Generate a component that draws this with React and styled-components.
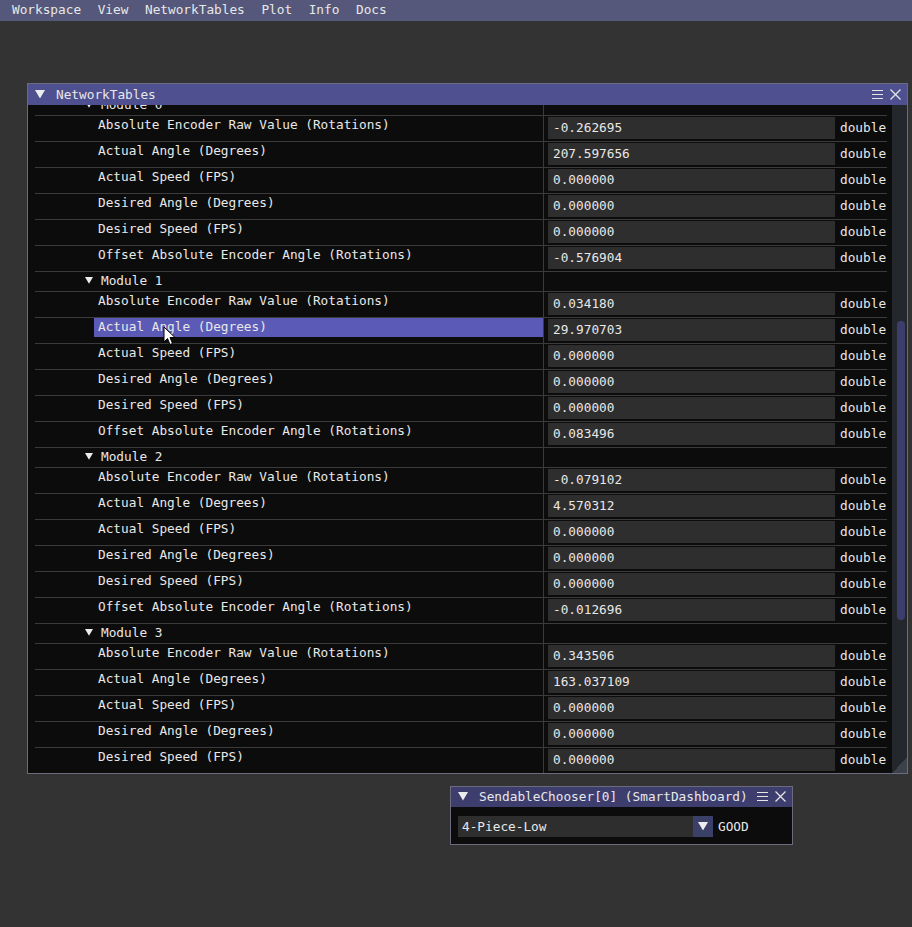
import React from "react";
import styled, { createGlobalStyle } from "styled-components";

const LABELS = [
  "Absolute Encoder Raw Value (Rotations)",
  "Actual Angle (Degrees)",
  "Actual Speed (FPS)",
  "Desired Angle (Degrees)",
  "Desired Speed (FPS)",
  "Offset Absolute Encoder Angle (Rotations)",
];

const MODULES = [
  ["-0.262695", "207.597656", "0.000000", "0.000000", "0.000000", "-0.576904"],
  ["0.034180", "29.970703", "0.000000", "0.000000", "0.000000", "0.083496"],
  ["-0.079102", "4.570312", "0.000000", "0.000000", "0.000000", "-0.012696"],
  ["0.343506", "163.037109", "0.000000", "0.000000", "0.000000", "-0.211426"],
];

const MENU = ["Workspace", "View", "NetworkTables", "Plot", "Info", "Docs"];

const Arrow = ({ size = 10 }) => (
  <ArrowSvg width={size} height={size * 0.85} viewBox="0 0 10 8.5">
    <polygon points="0,0 10,0 5,8.5" fill="#ececec" />
  </ArrowSvg>
);

const TitleIcons = () => (
  <IconGroup>
    <svg width="13" height="13" viewBox="0 0 13 13">
      <g stroke="#e6e6e6" strokeWidth="1">
        <line x1="1" y1="2.5" x2="12" y2="2.5" />
        <line x1="1" y1="6.5" x2="12" y2="6.5" />
        <line x1="1" y1="10.5" x2="12" y2="10.5" />
      </g>
    </svg>
    <svg width="13" height="13" viewBox="0 0 13 13">
      <g stroke="#e6e6e6" strokeWidth="1.2">
        <line x1="1.5" y1="1.5" x2="11.5" y2="11.5" />
        <line x1="11.5" y1="1.5" x2="1.5" y2="11.5" />
      </g>
    </svg>
  </IconGroup>
);

export default function App() {
  return (
    <>
      <GlobalStyle />
      <MenuBar>
        {MENU.map((m) => (
          <MenuItem key={m}>{m}</MenuItem>
        ))}
      </MenuBar>

      <Desktop>
        <Window $left={27} $top={83} $width={881} $height={691}>
          <TitleBar $active>
            <Arrow />
            <TitleText>NetworkTables</TitleText>
            <TitleIcons />
          </TitleBar>
          <Body>
            <TableArea>
              <TableList>
                {MODULES.map((vals, mi) => (
                  <React.Fragment key={mi}>
                    <ModuleRow>
                      <NameCell>
                        <ModuleLabel>
                          <Arrow size={8} />
                          <span>Module {mi}</span>
                        </ModuleLabel>
                      </NameCell>
                      <ValueCell />
                    </ModuleRow>
                    {LABELS.map((label, li) => {
                      const selected = mi === 1 && li === 1;
                      return (
                        <Row key={label}>
                          <NameCell>
                            <LeafLabel $selected={selected}>{label}</LeafLabel>
                          </NameCell>
                          <ValueCell>
                            <Input>{vals[li]}</Input>
                            <TypeText>double</TypeText>
                          </ValueCell>
                        </Row>
                      );
                    })}
                  </React.Fragment>
                ))}
              </TableList>
            </TableArea>
            <ScrollTrack>
              <ScrollThumb />
            </ScrollTrack>
          </Body>
          <ResizeGrip />
        </Window>

        <Window $left={450} $top={786} $width={343} $height={59}>
          <TitleBar>
            <Arrow />
            <TitleText>SendableChooser[0] (SmartDashboard)</TitleText>
            <TitleIcons />
          </TitleBar>
          <ChooserBody>
            <Combo>
              <ComboText>4-Piece-Low</ComboText>
              <ComboButton>
                <Arrow />
              </ComboButton>
            </Combo>
            <Status>GOOD</Status>
          </ChooserBody>
        </Window>

        <Cursor>
          <svg width="13" height="20" viewBox="0 0 13 20">
            <path
              d="M1 1 L1 16 L4.5 12.5 L7 18.5 L9.5 17.5 L7 11.5 L12 11.5 Z"
              fill="#fff"
              stroke="#000"
              strokeWidth="1"
              strokeLinejoin="round"
            />
          </svg>
        </Cursor>
      </Desktop>
    </>
  );
}

const GlobalStyle = createGlobalStyle`
  html, body {
    margin: 0;
    background: #333333;
    color: #e8e8e8;
    font-family: "DejaVu Sans Mono", "Liberation Mono", monospace;
    font-size: 12.75px;
  }
  * { box-sizing: border-box; }
`;

const ArrowSvg = styled.svg`
  flex: none;
`;

const MenuBar = styled.div`
  height: 21px;
  background: #55587a;
  display: flex;
  align-items: flex-start;
  padding-left: 3.7px;
`;

const MenuItem = styled.div`
  padding: 0 8.3px;
  line-height: 19px;
  white-space: nowrap;
`;

const Desktop = styled.div`
  position: relative;
  height: 906px;
`;

const Window = styled.div`
  position: absolute;
  left: ${(p) => p.$left}px;
  top: ${(p) => p.$top - 21}px;
  width: ${(p) => p.$width}px;
  height: ${(p) => p.$height}px;
  border: 1px solid #6b6b7d;
  background: #0c0c0c;
  display: flex;
  flex-direction: column;
  overflow: hidden;
`;

const TitleBar = styled.div`
  height: ${(p) => (p.$active ? 21 : 20)}px;
  flex: none;
  background: ${(p) => (p.$active ? "#4f5090" : "#3d3e6e")};
  display: flex;
  align-items: center;
  padding: 0 5px 1px 7px;
  gap: 11px;
`;

const TitleText = styled.div`
  flex: 1;
  white-space: nowrap;
`;

const IconGroup = styled.div`
  display: flex;
  flex: none;
  gap: 5px;
  align-items: center;
  margin-left: -4px;
`;

const Body = styled.div`
  flex: 1;
  display: flex;
  min-height: 0;
`;

const TableArea = styled.div`
  flex: 1;
  overflow: hidden;
  padding: 0 5px 0 7px;
`;

const TableList = styled.div`
  margin-top: -10px;
`;

const Row = styled.div`
  display: grid;
  grid-template-columns: 508px 1fr;
  height: 26px;
  border-top: 1px solid #3b3b3b;
`;

const ModuleRow = styled(Row)`
  height: 20px;
`;

const NameCell = styled.div`
  min-width: 0;
`;

const ModuleLabel = styled.div`
  display: flex;
  align-items: center;
  gap: 8px;
  height: 17px;
  padding-left: 50px;
  white-space: nowrap;
`;

const LeafLabel = styled.div`
  height: 19px;
  line-height: 17px;
  margin-left: 59px;
  padding-left: 4px;
  white-space: nowrap;
  background: ${(p) => (p.$selected ? "#5b5bb7" : "transparent")};
`;

const ValueCell = styled.div`
  border-left: 1px solid #3b3b3b;
  display: flex;
  align-items: flex-start;
  gap: 5px;
  padding: 1px 0 0 4px;
`;

const Input = styled.div`
  width: 287px;
  height: 22px;
  line-height: 21px;
  background: #2e2e2e;
  padding-left: 5px;
  white-space: nowrap;
`;

const TypeText = styled.div`
  line-height: 21px;
`;

const ScrollTrack = styled.div`
  width: 15px;
  flex: none;
  background: #24282c;
  padding: 216px 2px 0 5px;
`;

const ScrollThumb = styled.div`
  width: 8px;
  height: 299px;
  border-radius: 4px;
  background: #3b3e6b;
`;

const ResizeGrip = styled.div`
  position: absolute;
  right: 0;
  bottom: 0;
  width: 15px;
  height: 15px;
  background: linear-gradient(135deg, transparent 50%, #3c4249 50%);
`;

const ChooserBody = styled.div`
  flex: 1;
  display: flex;
  align-items: center;
  gap: 5px;
  padding: 1px 7px 0 7px;
`;

const Combo = styled.div`
  width: 255px;
  height: 21px;
  display: flex;
  background: #2e2e2e;
`;

const ComboText = styled.div`
  flex: 1;
  line-height: 21px;
  padding-left: 4px;
`;

const ComboButton = styled.div`
  width: 20px;
  background: #3b4068;
  display: flex;
  align-items: center;
  justify-content: center;
`;

const Status = styled.div`
  line-height: 21px;
`;

const Cursor = styled.div`
  position: absolute;
  left: 163px;
  top: ${326 - 21}px;
  line-height: 0;
`;
